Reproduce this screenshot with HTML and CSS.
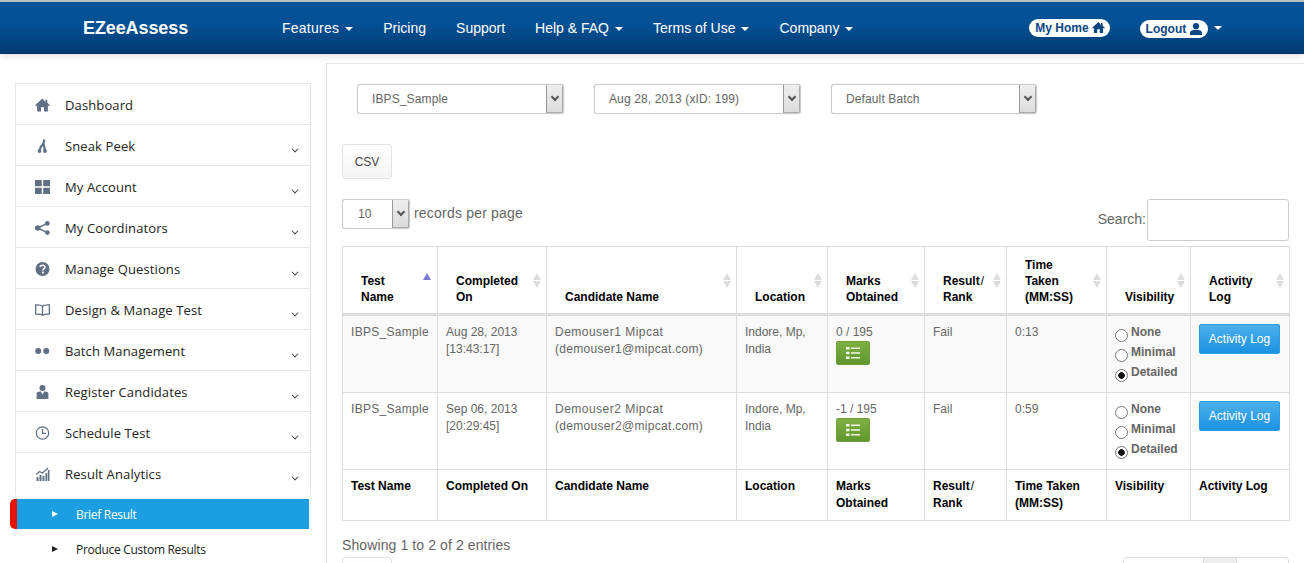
FILE: index.html
```html
<!DOCTYPE html>
<html lang="en">
<head>
<meta charset="utf-8">
<title>EZeeAssess</title>
<link rel="stylesheet" href="styles.css">
</head>
<body>
<div class="page">
  <header class="topbar">
    <a class="brand">EZeeAssess</a>
    <nav class="nav">
      <a>Features<i class="caret"></i></a>
      <a>Pricing</a>
      <a>Support</a>
      <a>Help &amp; FAQ<i class="caret"></i></a>
      <a>Terms of Use<i class="caret"></i></a>
      <a>Company<i class="caret"></i></a>
    </nav>
    <div class="user">
      <a class="pill pill-home">My Home
        <svg viewBox="0 0 14 12" width="13" height="11"><path d="M7 0 0 6.200l.9 1L2 6.300V12h3.600V8h2.800v4H12V6.300l1.100.9.9-1-2.500-2.200V1h-1.800v2.200z"/></svg>
      </a>
      <a class="pill pill-logout">Logout
        <svg viewBox="0 0 14 12" width="14" height="12"><circle cx="7" cy="3.200" r="3.100"/><path d="M1 12V10c0-2 2-3 3.500-3h5C11 7 13 8 13 10v2z"/></svg>
      </a>
      <i class="caret"></i>
    </div>
  </header>

  <div class="layout">
    <aside class="side">
      <ul class="menu">
        <li><svg class="ico" viewBox="0 0 14 12"><path d="M7 0 0 6.200l.9 1L2 6.300V12h3.600V8h2.800v4H12V6.300l1.100.9.9-1-2.500-2.200V1h-1.800v2.200z"/></svg><span>Dashboard</span></li>
        <li><svg class="ico" viewBox="0 0 15 14"><path d="M9.200.5 8.600 4 5.500 8.500 4.600 12M8.400 5l1 3.500.6 3.500" fill="none" stroke="#5f6f84" stroke-width="2.200"/><circle cx="4.500" cy="12" r="1.900"/><circle cx="10" cy="12" r="1.900"/></svg><span>Sneak Peek</span><i class="chev"></i></li>
        <li><svg class="ico" viewBox="0 0 14 13"><path d="M0 0h6.300v5.800H0zM7.700 0H14v5.800H7.700zM0 7.200h6.300V13H0zM7.700 7.200H14V13H7.700z"/></svg><span>My Account</span><i class="chev"></i></li>
        <li><svg class="ico" viewBox="0 0 14 13"><circle cx="11.500" cy="2.200" r="2.200"/><circle cx="2.500" cy="6.500" r="2.500"/><circle cx="11.500" cy="10.800" r="2.200"/><path d="M2.500 6.500 11.500 2.200M2.500 6.500l9 4.300" stroke="#5f6f84" stroke-width="1.400"/></svg><span>My Coordinators</span><i class="chev"></i></li>
        <li><svg class="ico" viewBox="0 0 14 14"><circle cx="7" cy="7" r="7"/><path d="M4.600 5.200C4.800 3.800 5.800 3.200 7 3.200c1.400 0 2.400.8 2.400 2 0 1.800-2 1.700-2 3.300" fill="none" stroke="#fff" stroke-width="1.600"/><rect x="6.400" y="9.600" width="2" height="1.800" fill="#fff"/></svg><span>Manage Questions</span><i class="chev"></i></li>
        <li><svg class="ico" viewBox="0 0 14 11"><path d="M7 2C6 1 4 .7 1.800.7H.6v8.600h2C4.500 9.300 6 9.600 7 10.300c1-.7 2.500-1 4.400-1h2V.7h-1.200C10 .7 8 1 7 2zM7 2v8.300" fill="none" stroke="#5f6f84" stroke-width="1.200"/></svg><span>Design &amp; Manage Test</span><i class="chev"></i></li>
        <li><svg class="ico" viewBox="0 0 14 6"><circle cx="3" cy="3" r="2.800"/><circle cx="10.500" cy="3" r="2.800"/></svg><span>Batch Management</span><i class="chev"></i></li>
        <li><svg class="ico" viewBox="0 0 14 13"><circle cx="7" cy="2.800" r="2.800"/><path d="M1.500 13V7.800c0-.8.600-1.200 1.300-1.400l2.400-.6L7 8.800l1.800-3 2.400.6c.7.2 1.300.6 1.300 1.400V13z"/></svg><span>Register Candidates</span><i class="chev"></i></li>
        <li><svg class="ico" viewBox="0 0 14 14"><circle cx="7" cy="7" r="6.200" fill="none" stroke="#5f6f84" stroke-width="1.200"/><path d="M7 3v4.400h3.600" fill="none" stroke="#5f6f84" stroke-width="1.300"/></svg><span>Schedule Test</span><i class="chev"></i></li>
        <li><svg class="ico" viewBox="0 0 14 14"><path d="M1 10h2v4H1zM4 8h2v6H4zM7 9h2v5H7zM10 6h1.700v8H10zM12.300 3H14v11h-1.700z"/><path d="M.8 7.500 4 4.500l3 1.500L12.500 1" fill="none" stroke="#5f6f84" stroke-width="1.200"/></svg><span>Result Analytics</span><i class="chev"></i></li>
      </ul>
      <ul class="submenu">
        <li class="active"><i class="tri"></i>Brief Result</li>
        <li><i class="tri"></i>Produce Custom Results</li>
      </ul>
    </aside>

    <main class="main">
      <div class="filters">
        <div class="select filter"><span>IBPS_Sample</span><b class="arrow"><i></i></b></div>
        <div class="select filter"><span>Aug 28, 2013 (xID: 199)</span><b class="arrow"><i></i></b></div>
        <div class="select filter"><span>Default Batch</span><b class="arrow"><i></i></b></div>
      </div>
      <button class="btn-csv">CSV</button>
      <div class="controls">
        <div class="length">
          <div class="select small"><span>10</span><b class="arrow"><i></i></b></div>
          <span class="length-label">records per page</span>
        </div>
        <div class="search"><span>Search:</span><div class="search-input"></div></div>
      </div>
      <table class="grid">
        <colgroup>
          <col class="c1"><col class="c2"><col class="c3"><col class="c4"><col class="c5"><col class="c6"><col class="c7"><col class="c8"><col class="c9">
        </colgroup>
        <thead>
          <tr>
            <th class="sort-asc">Test<br>Name</th>
            <th class="sort">Completed<br>On</th>
            <th class="sort">Candidate Name</th>
            <th class="sort">Location</th>
            <th class="sort">Marks<br>Obtained</th>
            <th class="sort">Result<span class="thin">/</span><br>Rank</th>
            <th class="sort">Time<br>Taken<br>(MM:SS)</th>
            <th class="sort">Visibility</th>
            <th class="sort">Activity<br>Log</th>
          </tr>
        </thead>
        <tbody>
          <tr class="odd">
            <td class="wide-a">IBPS_Sample</td>
            <td>Aug 28, 2013<br>[13:43:17]</td>
            <td><span class="wide-b">Demouser1 Mipcat</span><br><span class="wide-a">(demouser1@mipcat.com)</span></td>
            <td>Indore, Mp,<br>India</td>
            <td>0 / 195<a class="btn-green"><svg viewBox="0 0 14 12" width="14" height="12"><path d="M0 0h3.500v2.600H0zM5 .6h9v1.400H5zM0 4.700h3.500v2.600H0zM5 5.300h9v1.400H5zM0 9.400h3.500V12H0zM5 10h9v1.400H5z"/></svg></a></td>
            <td>Fail</td>
            <td>0:13</td>
            <td class="vis">
              <label><input type="radio" name="v1">None</label>
              <label><input type="radio" name="v1">Minimal</label>
              <label><input type="radio" name="v1" checked>Detailed</label>
            </td>
            <td><a class="btn-blue">Activity Log</a></td>
          </tr>
          <tr>
            <td class="wide-a">IBPS_Sample</td>
            <td>Sep 06, 2013<br>[20:29:45]</td>
            <td><span class="wide-b">Demouser2 Mipcat</span><br><span class="wide-a">(demouser2@mipcat.com)</span></td>
            <td>Indore, Mp,<br>India</td>
            <td>-1 / 195<a class="btn-green"><svg viewBox="0 0 14 12" width="14" height="12"><path d="M0 0h3.500v2.600H0zM5 .6h9v1.400H5zM0 4.700h3.500v2.600H0zM5 5.300h9v1.400H5zM0 9.400h3.500V12H0zM5 10h9v1.400H5z"/></svg></a></td>
            <td>Fail</td>
            <td>0:59</td>
            <td class="vis">
              <label><input type="radio" name="v2">None</label>
              <label><input type="radio" name="v2">Minimal</label>
              <label><input type="radio" name="v2" checked>Detailed</label>
            </td>
            <td><a class="btn-blue">Activity Log</a></td>
          </tr>
        </tbody>
        <tfoot>
          <tr>
            <th>Test Name</th>
            <th>Completed On</th>
            <th>Candidate Name</th>
            <th>Location</th>
            <th>Marks<br>Obtained</th>
            <th>Result<span class="thin">/</span><br>Rank</th>
            <th>Time Taken<br>(MM:SS)</th>
            <th>Visibility</th>
            <th>Activity Log</th>
          </tr>
        </tfoot>
      </table>
      <p class="info">Showing 1 to 2 of 2 entries</p>
      <div class="bottom">
        <button class="btn-csv btn-next"></button>
        <div class="pager"><span class="p-wide"></span><span class="p-mid"></span><span class="p-end"></span></div>
      </div>
    </main>
  </div>
</div>
</body>
</html>
```
FILE: styles.css
```css
* { box-sizing: border-box; }
html, body { margin: 0; padding: 0; height: 563px; overflow: hidden; background: #fff; }
body { font-family: "Liberation Sans", Arial, sans-serif; font-size: 12px; color: #666; }
ul { list-style: none; margin: 0; padding: 0; }
.page { height: 563px; overflow: hidden; }

/* top bar */
.topbar {
  height: 54px;
  border-top: 2px solid #b9bcc0;
  border-bottom: 1px solid #022a55;
  background: linear-gradient(#045299 0, #045094 45%, #023a72 100%);
  display: flex;
  align-items: center;
  padding-left: 83px;
  box-shadow: 0 2px 8px rgba(0,0,0,.12);
  color: #fff;
}
.brand { font-size: 18px; font-weight: bold; width: 199px; letter-spacing: -.1px; margin-top: 2px; }
.nav { display: flex; gap: 30px; font-size: 14px; }
.nav a:first-child { letter-spacing: .25px; }
.caret {
  display: inline-block;
  width: 0; height: 0;
  margin-left: 6px;
  vertical-align: 2px;
  border-top: 4px solid #fff;
  border-left: 4px solid transparent;
  border-right: 4px solid transparent;
}
.user { margin-left: 176px; display: flex; align-items: center; }
.pill {
  height: 18px;
  border-radius: 9px;
  background: #fff;
  color: #0b4684;
  font-size: 12px;
  font-weight: bold;
  display: flex;
  align-items: center;
  justify-content: center;
  gap: 3px;
}
.pill svg { fill: #0b4684; }
.pill-home { width: 81px; }
.pill-logout { width: 68px; margin: 2px 0 0 30px; }
.user .caret { margin-left: 6px; }

/* sidebar */
.layout { display: flex; height: 509px; }
.side { width: 327px; flex: none; padding: 20px 0 0 10px; border-right: 1px solid #e6e6e6; margin-top: 9px; }
.menu {
  margin-left: 5px;
  width: 296px;
  border: 1px solid #e6e6e6;
  border-bottom: 0;
  font-family: "Open Sans", sans-serif;
  font-size: 13px;
  color: #222;
  letter-spacing: .12px;
}
.menu li {
  height: 41px;
  display: flex;
  align-items: center;
  padding: 1px 0 0 19px;
  border-bottom: 1px solid #e8e8e8;
  position: relative;
}
.menu li:last-child { border-bottom: 0; height: 42px; padding-top: 0; }
.ico { width: 15px; height: 14px; fill: #5f6f84; margin-right: 15px; flex: none; }
.chev {
  position: absolute;
  right: 12px;
  top: 21px;
  width: 6px; height: 6px;
  border-right: 1.300px solid #333;
  border-bottom: 1.300px solid #333;
  transform: rotate(45deg) scale(.8);
}
.submenu { margin-top: 4px; font-family: "Open Sans", sans-serif; font-size: 12px; color: #222; letter-spacing: -.3px; }
.submenu li { height: 30px; width: 299px; display: flex; align-items: center; padding-left: 42px; margin-bottom: 5px; }
.submenu .active {
  background: #1b9fe2;
  color: #fff;
  border-left: 7px solid #e81200;
  border-radius: 5px 0 0 5px;
  padding-left: 35px;
}
.tri {
  width: 0; height: 0;
  margin-right: 18px;
  border-left: 6px solid currentColor;
  border-top: 3.500px solid transparent;
  border-bottom: 3.500px solid transparent;
}

/* main */
.main { flex: 1; padding: 20px 15px 0 15px; border-top: 1px solid #e6e6e6; margin-top: 9px; min-width: 0; }
.filters { display: flex; gap: 30px; padding-left: 15px; letter-spacing: .12px; }
.select {
  height: 30px;
  border: 1px solid #ccc;
  border-radius: 3px;
  display: flex;
  align-items: center;
  justify-content: space-between;
  background: #fff;
  overflow: hidden;
  box-shadow: 0 0 1px #bbb;
}
.filter { width: 207px; padding-left: 14px; }
.filter:last-child { width: 206px; }
.arrow {
  width: 17px;
  height: 100%;
  flex: none;
  display: flex;
  align-items: center;
  justify-content: center;
  background: linear-gradient(#eee, #dcdcdc);
  border-left: 1px solid #999;
  border-right: 1px solid #aaa;
  border-bottom: 1px solid #aaa;
}
.arrow i {
  width: 6px; height: 6px;
  margin-top: -3px;
  border-right: 2px solid #555;
  border-bottom: 2px solid #555;
  transform: rotate(45deg);
}
.btn-csv {
  display: block;
  width: 50px;
  height: 35px;
  margin-top: 30px;
  border: 1px solid #e3e3e3;
  border-radius: 3px;
  background: linear-gradient(#fff, #f4f4f4);
  font: 12px "Liberation Sans", Arial, sans-serif;
  color: #444;
  padding: 0;
}
.controls { display: flex; justify-content: space-between; margin-top: 20px; height: 47px; }
.length { display: flex; align-items: flex-start; }
.small { width: 68px; padding-left: 15px; }
.length-label { font-size: 14px; margin: 6px 0 0 4px; letter-spacing: .2px; }
.search { display: flex; align-items: flex-start; font-size: 14px; }
.search span { margin-top: 12px; margin-right: 1px; }
.search-input { width: 142px; height: 42px; border: 1px solid #ccc; border-radius: 3px; }

/* table */
.grid { width: 947px; table-layout: fixed; border-collapse: collapse; border: 1px solid #ddd; }
.c1 { width: 95px; } .c2 { width: 109px; } .c3 { width: 190px; } .c4 { width: 91px; }
.c5 { width: 97px; } .c6 { width: 82px; } .c7 { width: 100px; } .c8 { width: 84px; } .c9 { width: 99px; }
.grid th, .grid td { border: 1px solid #ddd; padding: 8px; text-align: left; vertical-align: top; line-height: 17px; }
.grid th { color: #000; font-weight: bold; }
.grid thead th {
  vertical-align: bottom;
  height: 68px;
  line-height: 16px;
  padding: 8px 18px 8px 18px;
  border-bottom: 3px solid #ddd;
  position: relative;
}
.grid tbody td { height: 77px; }
.grid tfoot th { height: 51px; }
.odd td { background: #f9f9f9; }
.wide-a { letter-spacing: .3px; }
.wide-b { letter-spacing: .48px; }
.thin { font-weight: normal; margin-left: 1px; }
.sort::before, .sort::after, .sort-asc::before {
  content: "";
  position: absolute;
  right: 5px;
  width: 0; height: 0;
  border-left: 4px solid transparent;
  border-right: 4px solid transparent;
}
.sort::before { top: 26px; border-bottom: 7px solid #ddd; }
.sort::after { top: 34px; border-top: 7px solid #ddd; }
.sort-asc::before { top: 26px; right: 6px; border-bottom: 7px solid #7b7bd6; }
.btn-green {
  display: flex;
  width: 34px;
  height: 24px;
  align-items: center;
  justify-content: center;
  border-radius: 2px;
  background: linear-gradient(#7fb040, #5f972e);
  border: 1px solid #6f9f3a;
}
.btn-green svg { fill: #f2f7e8; }
.vis label { display: flex; height: 20px; align-items: flex-start; font-weight: bold; }
.vis input {
  appearance: none;
  width: 13px; height: 13px;
  margin: 5px 3px 0 0;
  flex: none;
  border: 1px solid #777;
  border-radius: 50%;
  background: #fff;
}
.vis input:checked { background: radial-gradient(circle, #111 0 3px, #fff 3.500px); }
.btn-blue {
  display: flex;
  width: 81px;
  height: 30px;
  align-items: center;
  justify-content: center;
  border-radius: 2px;
  color: #fff;
  background: linear-gradient(#4db0ec, #1a92e0);
  border: 1px solid #2c9ce3;
}
.info { font-size: 14px; margin: 16px 0 0; line-height: 17px; letter-spacing: .1px; }
.bottom { display: flex; justify-content: space-between; margin-top: 3px; }
.btn-next { margin: 0; }
.pager { display: flex; width: 166px; height: 30px; border: 1px solid #ddd; border-radius: 4px; }
.p-wide { width: 79px; }
.p-mid { width: 34px; background: #eee; border-left: 1px solid #ddd; border-right: 1px solid #ddd; }
```
